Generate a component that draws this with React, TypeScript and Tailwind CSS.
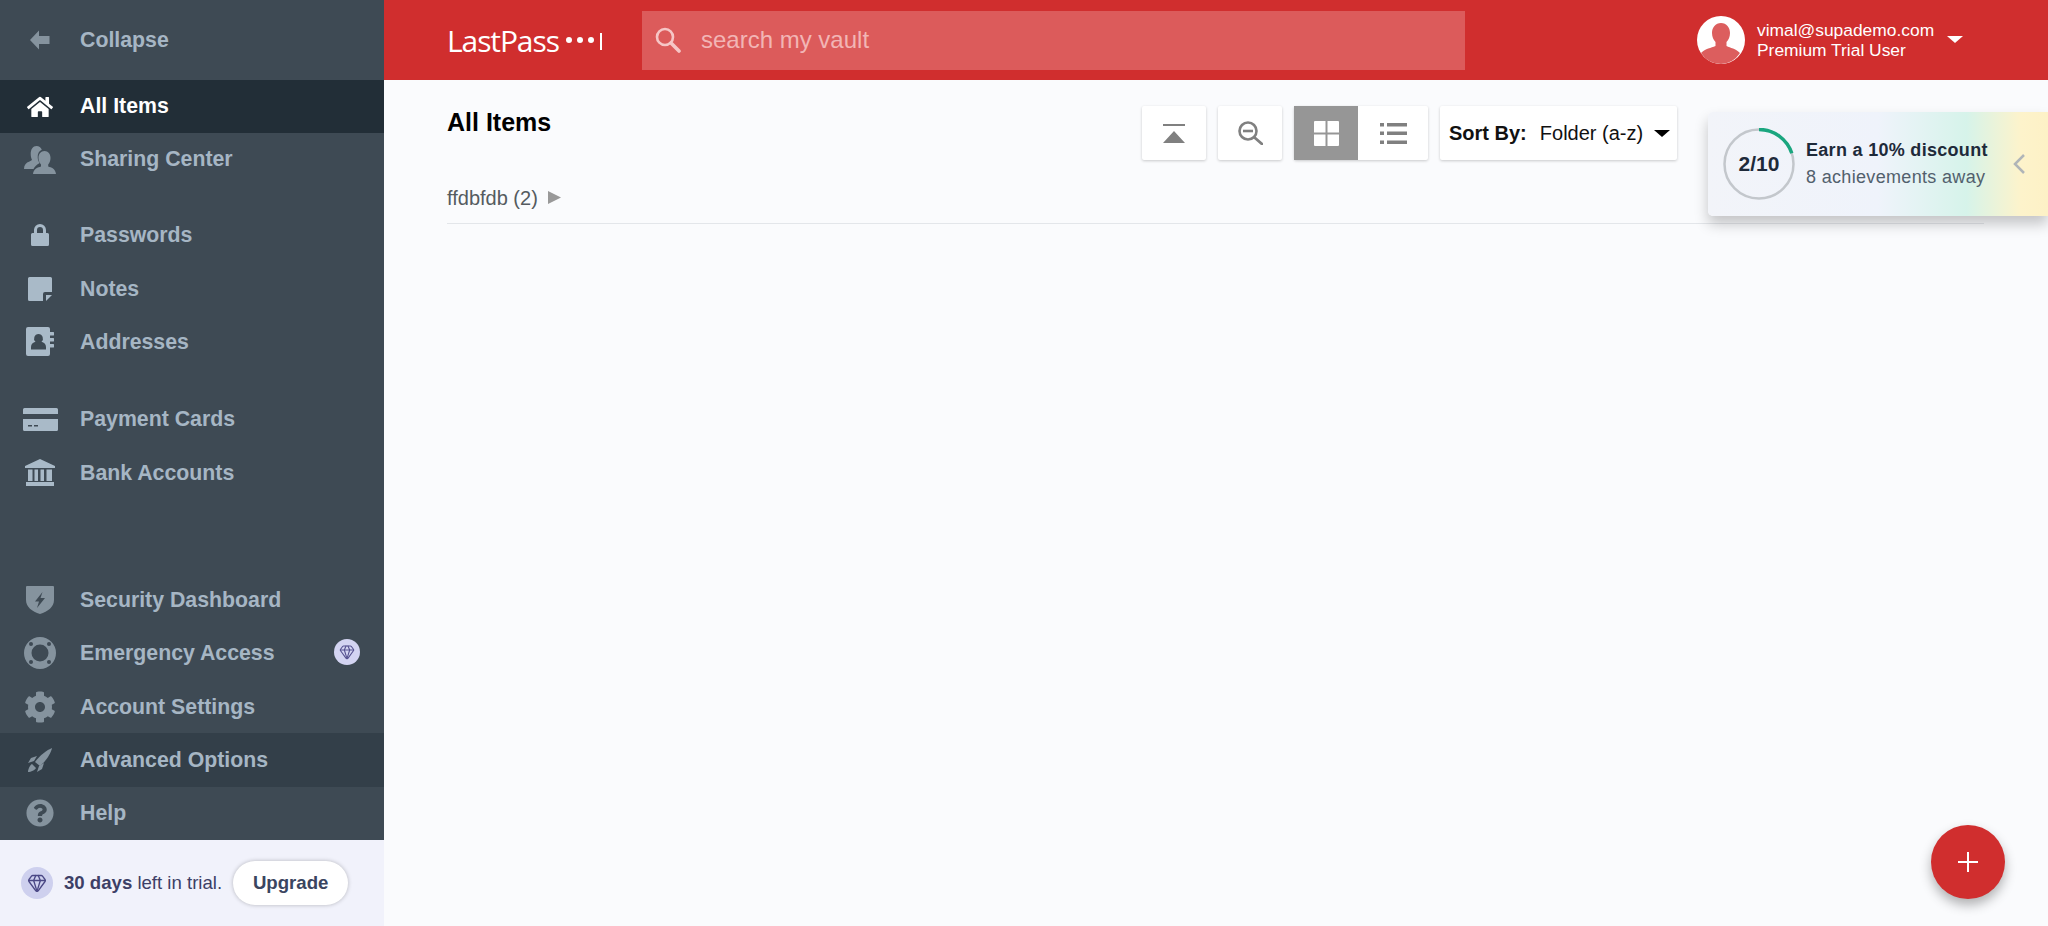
import { ReactNode } from "react";
import { FaCog, FaHome, FaQuestionCircle } from "react-icons/fa";
import { Gem } from "lucide-react";

const BackIcon = () => (
    <svg width="22" height="22" viewBox="0 0 22 22" fill="currentColor">
        <path d="M1 11 10 1.500V7h10.500v8H10v5.500z" />
    </svg>
);

const SharingIcon = () => (
    <svg width="32" height="30" viewBox="0 0 32 30" fill="currentColor">
        <path d="M8 15c-.6-2-1.300-3-1.300-6C6.700 4 9 1 12.500 1c2.600 0 4.500 1.500 5.300 3.700C14.800 6 13.500 9 13.700 12.500c.1 2.500 1 4.300 2 5.500-3 1.500-5 3.500-6.200 6H0c0-4 2-6.500 5.500-7.500z" />
        <path d="M20.500 6c3.700 0 6 3 6 7 0 3-1 5-2.300 6.500v2c3 1 7.300 2 7.800 7.500H9c.5-5.500 5-6.500 8-7.500v-2C15.700 18 14.500 16 14.500 13c0-4 2.300-7 6-7z" />
    </svg>
);

const LockIcon = () => (
    <svg width="18" height="22" viewBox="0 0 18 22" fill="currentColor">
        <path fillRule="evenodd" d="M3 9V6a6 6 0 0 1 12 0v3h1.500A1.500 1.500 0 0 1 18 10.500v10a1.500 1.500 0 0 1-1.500 1.500h-15A1.500 1.500 0 0 1 0 20.500v-10A1.500 1.500 0 0 1 1.500 9zm3 0h6V6a3 3 0 0 0-6 0z" />
    </svg>
);

const NoteIcon = () => (
    <svg width="24" height="24" viewBox="0 0 24 24" fill="currentColor">
        <path d="M1.500 0h21A1.500 1.500 0 0 1 24 1.500V15h-7a2 2 0 0 0-2 2v7H1.500A1.500 1.500 0 0 1 0 22.500v-21A1.500 1.500 0 0 1 1.500 0z" />
        <path d="M18 18h6l-6 6z" />
    </svg>
);

const AddressIcon = () => (
    <svg width="28" height="29" viewBox="0 0 28 29" fill="currentColor">
        <path fillRule="evenodd" d="M2 0h20a2 2 0 0 1 2 2v25a2 2 0 0 1-2 2H2a2 2 0 0 1-2-2V2a2 2 0 0 1 2-2zm10.500 7a4.500 4.500 0 0 0-3 7.800C7 15.500 5 17 5 20v2.500h15V20c0-3-2-4.500-4.500-5.200a4.500 4.500 0 0 0-3-7.800z" />
        <path d="M24 5h3a1 1 0 0 1 0 3.500h-3zM24 11h3a1 1 0 0 1 0 3.500h-3zM24 17h3a1 1 0 0 1 0 3.500h-3z" />
    </svg>
);

const CardIcon = () => (
    <svg width="35" height="23" viewBox="0 0 35 23" fill="currentColor">
        <path d="M1.500 0h32A1.500 1.500 0 0 1 35 1.500V6H0V1.500A1.500 1.500 0 0 1 1.500 0z" />
        <path fillRule="evenodd" d="M0 11h35v10.500a1.500 1.500 0 0 1-1.500 1.500h-32A1.500 1.500 0 0 1 0 21.500zm5 6v1.500h4V17zm6 0v1.500h4V17z" />
    </svg>
);

const BankIcon = () => (
    <svg width="30" height="27" viewBox="0 0 30 27" fill="currentColor">
        <path d="M15 0 30 7v2H0V7zM3 10.500h4.500V22H3zM9.500 10.500H13V22H9.500zM15.500 10.500H19V22h-3.500zM21.500 10.500H27V22h-5.500zM1 23h28v4H1z" />
    </svg>
);

const ShieldIcon = () => (
    <svg width="28" height="28" viewBox="0 0 28 28" fill="currentColor">
        <path fillRule="evenodd" d="M1 0h26a1 1 0 0 1 1 1v13c0 7-6 11.500-14 14C6 25.500 0 21 0 14V1a1 1 0 0 1 1-1zm15.500 6L9 15.500h4L11 22l8-10h-4.500z" />
    </svg>
);

const BuoyIcon = () => (
    <svg width="32" height="32" viewBox="0 0 32 32" fill="currentColor">
        <path fillRule="evenodd" d="M16 0a16 16 0 1 1 0 32 16 16 0 0 1 0-32zm0 7.500a8.500 8.500 0 1 0 0 17 8.500 8.500 0 0 0 0-17z" />
        <circle cx="7" cy="7" r="2" fill="#3e4a54" />
        <circle cx="25" cy="7" r="2" fill="#3e4a54" />
        <circle cx="7" cy="25" r="2" fill="#3e4a54" />
        <circle cx="25" cy="25" r="2" fill="#3e4a54" />
    </svg>
);

const RocketIcon = () => (
    <svg width="26" height="26" viewBox="0 0 26 26" fill="currentColor">
        <path d="M25 1c-1 5-5 12-12 18l-5-4C13 8 20 3 25 1z" />
        <path d="M10 9 4 11l-3 5 6-2zM17 16l-2 6-5 3 2-6z" />
        <path d="M5 17c-2 1-4 5-4 8 3 0 7-2 8-4z" />
    </svg>
);

const SearchIcon = () => (
    <svg width="26" height="26" viewBox="0 0 26 26" fill="none" stroke="currentColor">
        <circle cx="10" cy="10" r="8" strokeWidth="2.600" />
        <path d="M16 16l8 8" strokeWidth="3.600" strokeLinecap="round" />
    </svg>
);

const ZoomIcon = () => (
    <svg width="25" height="24" viewBox="0 0 25 24" fill="none" stroke="currentColor">
        <circle cx="10" cy="10" r="8.500" strokeWidth="2.600" />
        <path d="M16.500 16.500 24 23" strokeWidth="2.800" strokeLinecap="round" />
        <path d="M5 10h10" strokeWidth="2.600" />
    </svg>
);

const rowBase = "flex h-[53.33px] items-center text-[21.3px] font-bold";

const NavRow = ({
    icon,
    label,
    tone = "dim",
    bg = "",
    badge = false,
    labelClass = "pt-[2px]",
}: {
    icon: ReactNode;
    label: string;
    tone?: "dim" | "light" | "active";
    bg?: string;
    badge?: boolean;
    labelClass?: string;
}) => {
    const iconTone =
        tone === "active" ? "text-white" : tone === "light" ? "text-[#a9bac8]" : "text-[#85939e]";
    return (
        <div className={`${rowBase} ${bg} ${tone === "active" ? "text-white" : "text-[#a6b6c4]"}`}>
            <div className={`flex w-20 shrink-0 items-center justify-center ${iconTone}`}>{icon}</div>
            <span className={`flex-1 ${labelClass}`}>{label}</span>
            {badge && (
                <div className="mr-[24px] mb-[2px] flex h-[26px] w-[26px] items-center justify-center rounded-full bg-[#d3d4f2] text-[#54508f]">
                    <Gem size={16} strokeWidth={1.6} />
                </div>
            )}
        </div>
    );
};

const Sidebar = () => (
    <aside className="flex w-[383.5px] shrink-0 flex-col">
        <div className="flex flex-1 flex-col bg-[#3e4a54]">
            <div className="flex h-20 items-center text-[21.3px] font-bold text-[#a6b6c4]">
                <div className="flex w-20 shrink-0 justify-center text-[#85939e]">
                    <BackIcon />
                </div>
                <span className="pt-[2px]">Collapse</span>
            </div>
            <NavRow icon={<FaHome size={26} />} label="All Items" tone="active" bg="bg-[#222e37]" labelClass="" />
            <NavRow icon={<SharingIcon />} label="Sharing Center" labelClass="" />
            <div className="mt-[22px]">
                <NavRow icon={<LockIcon />} label="Passwords" tone="light" />
                <NavRow icon={<NoteIcon />} label="Notes" tone="light" />
                <NavRow icon={<AddressIcon />} label="Addresses" tone="light" />
            </div>
            <div className="mt-[24px]">
                <NavRow icon={<CardIcon />} label="Payment Cards" tone="light" />
                <NavRow icon={<BankIcon />} label="Bank Accounts" tone="light" />
            </div>
            <div className="mt-auto">
                <NavRow icon={<ShieldIcon />} label="Security Dashboard" />
                <NavRow icon={<BuoyIcon />} label="Emergency Access" badge />
                <NavRow icon={<FaCog size={32} />} label="Account Settings" />
                <NavRow icon={<RocketIcon />} label="Advanced Options" bg="bg-[#333f49]" />
                <NavRow icon={<FaQuestionCircle size={28} />} label="Help" />
            </div>
        </div>
        <div className="flex h-[86px] items-center bg-[#f1f2fb] pl-[21px] text-[18.6px] text-[#3d3f66]">
            <div className="mr-[11px] flex h-[32px] w-[32px] items-center justify-center rounded-full bg-[#ced0ee] text-[#4a4785]">
                <Gem size={20} strokeWidth={1.6} />
            </div>
            <span>
                <b>30 days</b> left in trial.
            </span>
            <button className="ml-[11px] h-[44px] w-[115px] rounded-full bg-white text-[18.6px] font-bold text-[#3a4560] shadow-[0_0_4px_rgba(0,0,0,0.25)]">
                Upgrade
            </button>
        </div>
    </aside>
);

const Avatar = () => (
    <svg width="50" height="50" viewBox="0 0 50 50">
        <circle cx="25" cy="25" r="24" fill="#fff" />
        <path d="M25 8c5.500 0 9 4.500 9 10 0 4-1.500 7-3.500 9v4c4 2 9 2.500 13.500 7A24 24 0 0 1 25 49 24 24 0 0 1 5 38c4.500-4.500 10-5 14.500-7v-4c-2-2-3.500-5-3.500-9 0-5.500 3.500-10 9-10z" fill="#dc5e5e" />
    </svg>
);

const Header = () => (
    <header className="flex h-20 items-center bg-[#d02e2e] text-white">
        <div className="ml-[63.5px] flex w-[195px] items-center">
            <span className="font-['Open_Sans',sans-serif] text-[30px] font-medium tracking-[-1.1px]">LastPass</span>
            <span className="ml-[7px] h-[6px] w-[6px] rounded-full bg-white" />
            <span className="ml-[5px] h-[6px] w-[6px] rounded-full bg-white" />
            <span className="ml-[5px] h-[6px] w-[6px] rounded-full bg-white" />
            <span className="mt-[2px] ml-[6px] h-[17px] w-[2px] bg-white" />
        </div>
        <div className="flex h-[59px] w-[823px] items-center bg-[#dc5b5b] pl-[13px] text-[#f6c6c6]">
            <SearchIcon />
            <span className="ml-[20px] text-[24px] text-[#f2b5b5]">search my vault</span>
        </div>
        <div className="ml-[231px] flex items-center">
            <Avatar />
            <div className="ml-[11px] text-[17.4px] leading-[20px]">
                <div>vimal@supademo.com</div>
                <div>Premium Trial User</div>
            </div>
            <span className="mb-[2px] ml-[13px] h-0 w-0 border-x-[8px] border-t-[7px] border-x-transparent border-t-white" />
        </div>
    </header>
);

const ToolButton = ({ children, className = "" }: { children: ReactNode; className?: string }) => (
    <div className={`flex h-[54px] shrink-0 items-center justify-center rounded-[2px] bg-white shadow-[0_1px_3px_rgba(0,0,0,0.2)] ${className}`}>
        {children}
    </div>
);

const Toolbar = () => (
    <div className="flex items-start gap-[12px] text-[#808080]">
        <ToolButton className="w-[64px]">
            <svg width="22" height="19" viewBox="0 0 22 19" fill="currentColor">
                <path d="M0 0h22v2H0zM11 7l11 12H0z" />
            </svg>
        </ToolButton>
        <ToolButton className="w-[64px]">
            <ZoomIcon />
        </ToolButton>
        <div className="flex h-[54px] w-[134px] shrink-0 rounded-[2px] bg-white shadow-[0_1px_3px_rgba(0,0,0,0.2)]">
            <div className="flex w-[64px] items-center justify-center bg-[#969696]">
                <svg width="25" height="25" viewBox="0 0 25 25" fill="#fff">
                    <path d="M1 0h10.500v11.500H0V1a1 1 0 0 1 1-1zM13.500 0H24a1 1 0 0 1 1 1v10.500H13.500zM0 13.500h11.500V25H1a1 1 0 0 1-1-1zM13.500 13.500H25V24a1 1 0 0 1-1 1H13.500z" />
                </svg>
            </div>
            <div className="flex flex-1 items-center justify-center">
                <svg width="27" height="21" viewBox="0 0 27 21" fill="currentColor">
                    <path d="M0 0h4v3.500H0zM7 0h20v3.500H7zM0 8.500h4V12H0zM7 8.500h20V12H7zM0 17.500h4V21H0zM7 17.500h20V21H7z" />
                </svg>
            </div>
        </div>
        <ToolButton className="w-[237px] justify-start pl-[9px] text-[20px] whitespace-nowrap text-[#111]">
            <b>Sort By:</b>
            <span className="ml-[13px]">Folder (a-z)</span>
            <span className="ml-[11px] h-0 w-0 border-x-[8px] border-t-[7px] border-x-transparent border-t-black" />
        </ToolButton>
    </div>
);

const Achievements = () => (
    <div className="absolute top-[112px] right-0 flex h-[104px] w-[340px] items-center rounded-l-[5px] bg-[linear-gradient(90deg,#f2f4f9_0%,#eff3fb_50%,#d6f3ea_76%,#fdf3cb_92%,#fdf1c6_100%)] pl-[15px] shadow-[0_8px_14px_rgba(0,0,0,0.22)]">
        <div className="relative flex h-[72px] w-[72px] shrink-0 items-center justify-center">
            <svg className="absolute inset-0" width="72" height="72" viewBox="0 0 72 72" fill="none">
                <circle cx="36" cy="36" r="34.500" stroke="#c3c7cc" strokeWidth="2.500" />
                <path d="M36 1.500A34.500 34.500 0 0 1 68.800 25.300" stroke="#1aa67f" strokeWidth="3.500" />
            </svg>
            <span className="text-[21px] font-bold text-[#1e2a3a]">2/10</span>
        </div>
        <div className="ml-[11px] flex-1">
            <div className="text-[18px] leading-[27px] font-bold tracking-[0.3px] text-[#1e2a3a]">Earn a 10% discount</div>
            <div className="text-[18px] leading-[27px] tracking-[0.33px] text-[#52606d]">8 achievements away</div>
        </div>
        <svg className="mr-[22px] text-[#b0b5b8]" width="14" height="22" viewBox="0 0 14 22" fill="none" stroke="currentColor" strokeWidth="2.500">
            <path d="M12 2 3 11l9 9" />
        </svg>
    </div>
);

export default function App() {
    return (
        <div className="relative flex h-screen w-full overflow-hidden bg-[#fafbfd] font-['Liberation_Sans',Arial,sans-serif]">
            <Sidebar />
            <main className="flex flex-1 flex-col">
                <Header />
                <div className="flex-1 pt-[26px] pr-[64px] pl-[63.5px]">
                    <div className="flex justify-between">
                        <h1 className="-mt-[2px] text-[25px] font-bold text-black">All Items</h1>
                        <div className="mr-[307px]">
                            <Toolbar />
                        </div>
                    </div>
                    <div className="mt-[14px] flex h-[50px] items-center border-b border-[#e3e6ea] pb-[2px] text-[20px] text-[#555b60]">
                        ffdbfdb (2)
                        <svg className="ml-[10px] text-[#999]" width="13" height="13" viewBox="0 0 13 13" fill="currentColor">
                            <path d="M0 0l13 6.500L0 13z" />
                        </svg>
                    </div>
                </div>
            </main>
            <Achievements />
            <button className="absolute right-[43px] bottom-[27px] flex h-[74px] w-[74px] items-center justify-center rounded-full bg-[#d02e2e] text-white shadow-[0_6px_12px_rgba(0,0,0,0.3)]">
                <svg width="20" height="20" viewBox="0 0 20 20" fill="currentColor">
                    <path d="M9 0h2v9h9v2h-9v9H9v-9H0V9h9z" />
                </svg>
            </button>
        </div>
    );
}
